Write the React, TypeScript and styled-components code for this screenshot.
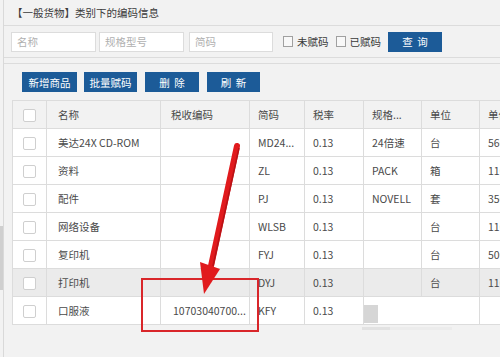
import React from 'react';
import styled, { createGlobalStyle } from 'styled-components';

const GlobalStyle = createGlobalStyle`
    body {
        margin: 0;
        font-family: "Noto Sans CJK SC", "Liberation Sans", sans-serif;
    }
`;

const Page = styled.div`
    position: relative;
    display: flex;
    width: 500px;
    height: 357px;
    overflow: hidden;
    background: #f2f2f2;
    color: #444;
    font-size: 10.5px;
`;

const Gutter = styled.div`
    width: 3px;
    flex: none;
`;

const GutterThumb = styled.div`
    margin-top: 226px;
    height: 64px;
    background: #cfcfcf;
`;

const Frame = styled.div`
    flex: 1;
    min-width: 0;
    border-left: 1px solid #d9d9d9;
`;

const Title = styled.div`
    height: 25px;
    line-height: 25px;
    padding-left: 8px;
    border-bottom: 1px solid #dcdcdc;
    color: #3a3a3a;
`;

const FilterBar = styled.div`
    display: flex;
    align-items: center;
    height: 31px;
    padding-left: 7px;
    border-bottom: 1px solid #dcdcdc;
`;

const Field = styled.input<{ $w: number; $gap: number }>`
    box-sizing: border-box;
    width: ${(p) => p.$w}px;
    height: 20px;
    margin-right: ${(p) => p.$gap}px;
    padding: 0 5px;
    border: 1px solid #dcdcdc;
    background: #fff;
    font: inherit;
    outline: none;

    &::placeholder {
        color: #b0b0b0;
    }
`;

const Check = styled.label<{ $left: number }>`
    display: flex;
    align-items: center;
    gap: 4px;
    margin-left: ${(p) => p.$left}px;
    color: #3a3a3a;
`;

const Box = styled.span`
    display: inline-block;
    width: 8px;
    height: 9px;
    border: 1px solid #a0a0a0;
    background: #f8f8f8;
`;

const BlueButton = styled.button<{ $w: number }>`
    width: ${(p) => p.$w}px;
    height: 20px;
    padding: 0;
    border: none;
    background: #1c5b98;
    color: #fff;
    font: inherit;
    font-size: 10.5px;
    white-space: pre;
`;

const SearchButton = styled(BlueButton)`
    margin-left: 7px;
`;

const Panel = styled.div`
    margin-top: 5px;
    padding: 8px 0 0 8px;
    border-top: 1px solid #dcdcdc;
`;

const Toolbar = styled.div`
    display: flex;
    gap: 8px;
    padding-left: 10px;

    & > button:first-child {
        margin-right: -1px;
    }
`;

const TableWrap = styled.div`
    margin-top: 8px;
    overflow: hidden;
`;

const Table = styled.table`
    width: 527px;
    table-layout: fixed;
    border-collapse: collapse;
`;

const HeadCell = styled.th<{ $pad?: number }>`
    height: 27px;
    padding: 0 0 0 ${(p) => p.$pad ?? 8}px;
    border: 1px solid #dcdcdc;
    background: #f2f2f2;
    color: #4a4a4a;
    font-weight: normal;
    text-align: left;
    white-space: nowrap;
    overflow: hidden;
`;

const Row = styled.tr<{ $active?: boolean }>`
    background: ${(p) => (p.$active ? '#ebebeb' : '#fff')};
`;

const Cell = styled.td<{ $pad?: number; $open?: boolean }>`
    height: 27px;
    padding: 0 0 0 ${(p) => p.$pad ?? 8}px;
    border: 1px solid #dcdcdc;
    ${(p) => (p.$open ? 'border-left: none;' : '')}
    color: #4a4a4a;
    white-space: nowrap;
    overflow: hidden;
`;

const CheckCell = styled.td<{ $head?: boolean }>`
    padding: 0;
    border: 1px solid #dcdcdc;
    background: ${(p) => (p.$head ? '#f2f2f2' : 'transparent')};
    text-align: center;
    vertical-align: middle;
`;

const RowBox = styled.span`
    display: inline-block;
    width: 11px;
    height: 11px;
    border: 1px solid #cfcfcf;
    border-radius: 2px;
    background: #fff;
    vertical-align: middle;
`;

const Stub = styled.div`
    width: 14px;
    height: 18px;
    margin-top: 6px;
    background: #d6d6d6;
`;

const ScrollTrack = styled.div`
    display: flex;
    margin: 2px 0 0 350px;
    height: 3px;
`;

const ScrollPart = styled.span<{ $w: number; $c: string }>`
    width: ${(p) => p.$w}px;
    background: ${(p) => p.$c};
`;

const Overlay = styled.svg`
    position: absolute;
    left: 0;
    top: 0;
    pointer-events: none;
`;

const cols = [34, 114, 89, 55, 59, 58, 58, 60];

const rows = [
    { name: '美达24X CD-ROM', code: '', short: 'MD24...', spec: '24倍速', unit: '台', price: '560.00' },
    { name: '资料', code: '', short: 'ZL', spec: 'PACK', unit: '箱', price: '110.00' },
    { name: '配件', code: '', short: 'PJ', spec: 'NOVELL', unit: '套', price: '350.00' },
    { name: '网络设备', code: '', short: 'WLSB', spec: '', unit: '台', price: '110.00' },
    { name: '复印机', code: '', short: 'FYJ', spec: '', unit: '台', price: '500.00' },
    { name: '打印机', code: '', short: 'DYJ', spec: '', unit: '台', price: '110.00', active: true },
];

export default function App() {
    return (
        <>
            <GlobalStyle />
            <Page>
                <Gutter>
                    <GutterThumb />
                </Gutter>
                <Frame>
                    <Title>【一般货物】类别下的编码信息</Title>
                    <FilterBar>
                        <Field $w={85} $gap={3} placeholder="名称" />
                        <Field $w={85} $gap={5} placeholder="规格型号" />
                        <Field $w={84} $gap={0} placeholder="简码" />
                        <Check $left={10}>
                            <Box />
                            未赋码
                        </Check>
                        <Check $left={7}>
                            <Box />
                            已赋码
                        </Check>
                        <SearchButton $w={54}>查  询</SearchButton>
                    </FilterBar>
                    <Panel>
                        <Toolbar>
                            <BlueButton $w={55}>新增商品</BlueButton>
                            <BlueButton $w={53}>批量赋码</BlueButton>
                            <BlueButton $w={54}>删  除</BlueButton>
                            <BlueButton $w={53}>刷  新</BlueButton>
                        </Toolbar>
                        <TableWrap>
                            <Table>
                                <colgroup>
                                    {cols.map((w, i) => (
                                        <col key={i} style={{ width: w }} />
                                    ))}
                                </colgroup>
                                <thead>
                                    <tr>
                                        <CheckCell as="th" $head>
                                            <RowBox />
                                        </CheckCell>
                                        <HeadCell $pad={11}>名称</HeadCell>
                                        <HeadCell $pad={10}>税收编码</HeadCell>
                                        <HeadCell>简码</HeadCell>
                                        <HeadCell>税率</HeadCell>
                                        <HeadCell>规格...</HeadCell>
                                        <HeadCell>单位</HeadCell>
                                        <HeadCell>单价</HeadCell>
                                    </tr>
                                </thead>
                                <tbody>
                                    {rows.map((r) => (
                                        <Row key={r.name} $active={r.active}>
                                            <CheckCell>
                                                <RowBox />
                                            </CheckCell>
                                            <Cell $pad={11}>{r.name}</Cell>
                                            <Cell $pad={10}>{r.code}</Cell>
                                            <Cell>{r.short}</Cell>
                                            <Cell>0.13</Cell>
                                            <Cell>{r.spec}</Cell>
                                            <Cell>{r.unit}</Cell>
                                            <Cell>{r.price}</Cell>
                                        </Row>
                                    ))}
                                    <Row>
                                        <CheckCell>
                                            <RowBox />
                                        </CheckCell>
                                        <Cell $pad={11}>口服液</Cell>
                                        <Cell $pad={12}>10703040700...</Cell>
                                        <Cell>KFY</Cell>
                                        <Cell>0.13</Cell>
                                        <Cell colSpan={2} $pad={0} $open>
                                            <Stub />
                                        </Cell>
                                        <Cell />
                                    </Row>
                                </tbody>
                            </Table>
                            <ScrollTrack>
                                <ScrollPart $w={28} $c="#e2e2e2" />
                                <ScrollPart $w={62} $c="#ececec" />
                            </ScrollTrack>
                        </TableWrap>
                    </Panel>
                </Frame>
                <Overlay width="500" height="357" viewBox="0 0 500 357">
                    <defs>
                        <filter id="soft" x="-20%" y="-20%" width="140%" height="140%">
                            <feGaussianBlur stdDeviation="0.6" />
                        </filter>
                    </defs>
                    <rect
                        x="142"
                        y="279"
                        width="116"
                        height="52"
                        fill="none"
                        stroke="#d9272b"
                        strokeWidth="2"
                        filter="url(#soft)"
                    />
                    <line
                        x1="237"
                        y1="146"
                        x2="211"
                        y2="266"
                        stroke="#e11a1d"
                        strokeWidth="6"
                        strokeLinecap="round"
                    />
                    <line x1="239" y1="148" x2="213" y2="266" stroke="#b81216" strokeWidth="1.5" />
                    <polygon points="200,262 220,269 204,294" fill="#e11a1d" />
                </Overlay>
            </Page>
        </>
    );
}
